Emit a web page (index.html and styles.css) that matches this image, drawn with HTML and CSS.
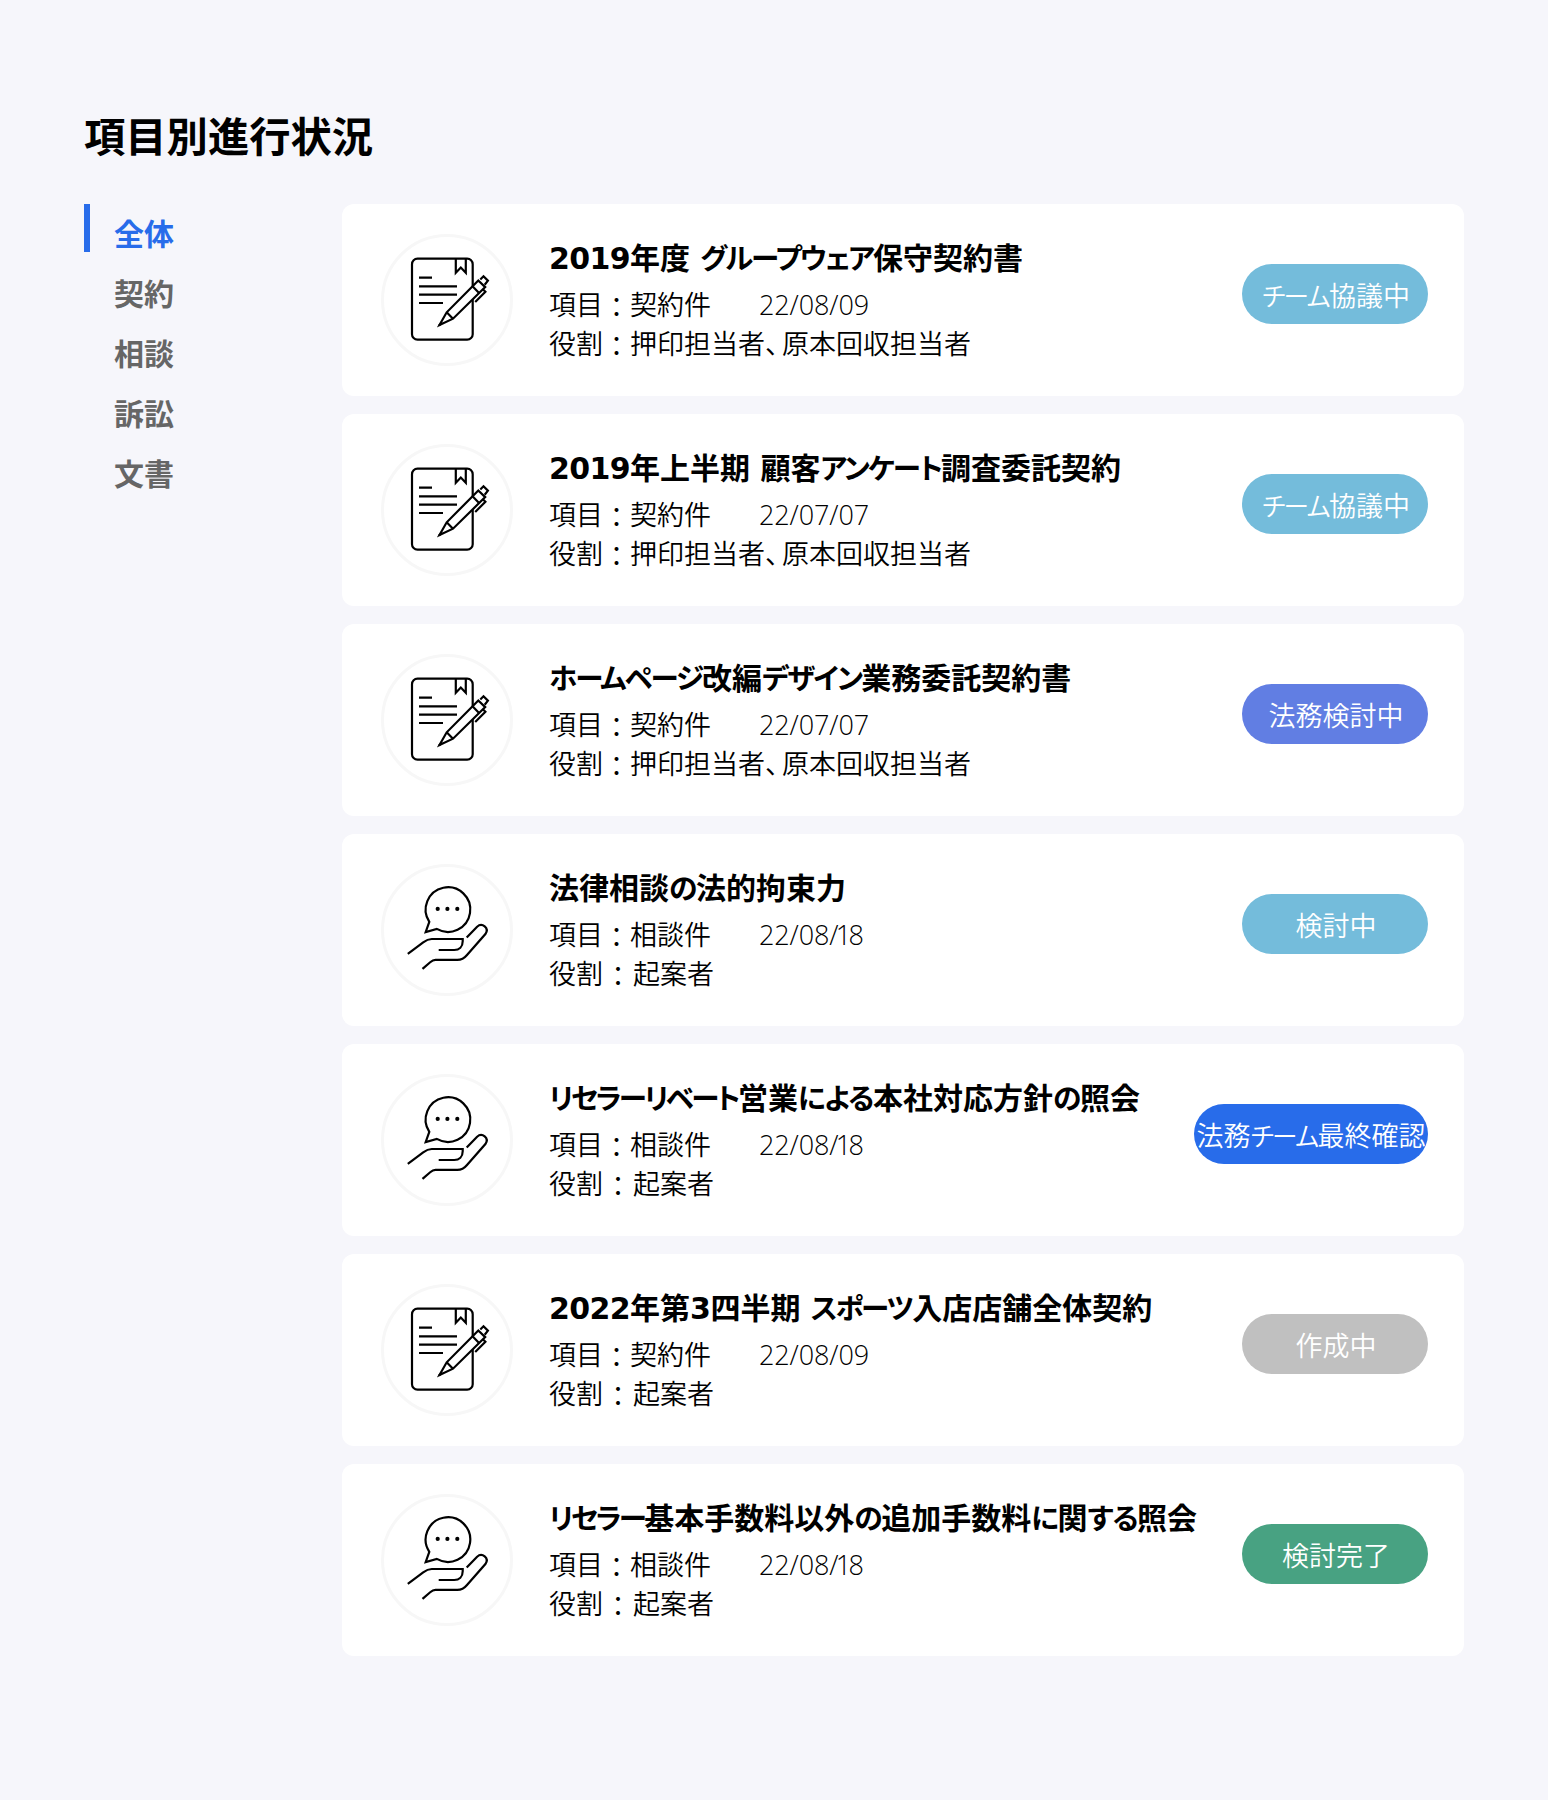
FILE: index.html
```html
<!DOCTYPE html>
<html lang="ja">
<head>
  <meta charset="UTF-8" />
  <meta name="viewport" content="width=device-width, initial-scale=1.0"/>
  <title>項目別進行状況</title>
  <link rel="stylesheet" href="styles.css">
</head>
<body>
  <svg class="sprite" aria-hidden="true">
    <symbol id="icon-contract" viewBox="0 0 132 132">
      <rect x="31" y="24.7" width="60.7" height="81" rx="5.5"/>
      <path d="M74.8 24.7v14.1l5-5.2 5 5.2V24.7"/>
      <path d="M38 43.7h13M38 52.3h38M38 60.7h38M38 69h24"/>
      <path class="pen" d="M58.5 91l7.2-12.7 31.6-31.8 6.9 6.6L72 84.7z"/>
      <path d="M65.7 78.3l6.3 6.4M91.5 52.3l6.3 6.4M58 91.5l1.5-1.5M99.3 45.5l3.2-3.2 4.4 4.4-3.2 4M101.8 55.3l2.6 2.5L94.2 68"/>
    </symbol>
    <symbol id="icon-consult" viewBox="0 0 132 132">
      <path d="M48.3 57.8a22.3 22.3 0 1 1 7.5 7.1L44.7 68z"/>
      <g class="dots">
        <circle cx="56.7" cy="44.9" r="2.1"/>
        <circle cx="66.4" cy="44.9" r="2.1"/>
        <circle cx="76.3" cy="44.9" r="2.1"/>
      </g>
      <path d="M26.8 89.9l15.4-11.6c2-1.5 4.5-3.3 8.5-3.3h31v2.2c0 5.6-3.5 8.8-8.5 8.8H57.7"/>
      <path d="M85.7 73.5l10.4-10.8c5-4.5 12.5 1.2 8.3 7.4L86 91c-3 3.6-5.6 4.9-9.7 4.9H54.5c-2.4 0-3.6.8-5.3 2.3l-7.7 6.6"/>
    </symbol>
  </svg>

  <h1 class="page-title">項目別進行状況</h1>

  <div class="content">
    <ul class="tabs">
      <li class="tab active">全体</li>
      <li class="tab">契約</li>
      <li class="tab">相談</li>
      <li class="tab">訴訟</li>
      <li class="tab">文書</li>
    </ul>

    <div class="list">
      <div class="card">
        <div class="icon"><svg><use href="#icon-contract"/></svg></div>
        <div class="info">
          <h2><span class="num">2019</span>年度 <span class="kana">グループウェア</span>保守契約書</h2>
          <p><span class="category">項目<span class="colon">：</span>契約件</span><span class="date">22/08/09</span></p>
          <p>役割<span class="colon">：</span>押印担当者<span class="comma">、</span>原本回収担当者</p>
        </div>
        <span class="status team"><span class="kana">チーム</span>協議中</span>
      </div>

      <div class="card">
        <div class="icon"><svg><use href="#icon-contract"/></svg></div>
        <div class="info">
          <h2><span class="num">2019</span>年上半期 顧客<span class="kana">アンケート</span>調査委託契約</h2>
          <p><span class="category">項目<span class="colon">：</span>契約件</span><span class="date">22/07/07</span></p>
          <p>役割<span class="colon">：</span>押印担当者<span class="comma">、</span>原本回収担当者</p>
        </div>
        <span class="status team"><span class="kana">チーム</span>協議中</span>
      </div>

      <div class="card">
        <div class="icon"><svg><use href="#icon-contract"/></svg></div>
        <div class="info">
          <h2><span class="kana">ホームページ</span>改編<span class="kana">デザイン</span>業務委託契約書</h2>
          <p><span class="category">項目<span class="colon">：</span>契約件</span><span class="date">22/07/07</span></p>
          <p>役割<span class="colon">：</span>押印担当者<span class="comma">、</span>原本回収担当者</p>
        </div>
        <span class="status legal">法務検討中</span>
      </div>

      <div class="card">
        <div class="icon"><svg><use href="#icon-consult"/></svg></div>
        <div class="info">
          <h2>法律相談<span class="hira">の</span>法的拘束力</h2>
          <p><span class="category">項目<span class="colon">：</span>相談件</span><span class="date">22/08<span class="slash">/</span><span class="one">1</span>8</span></p>
          <p>役割<span class="colon wide">：</span>起案者</p>
        </div>
        <span class="status team">検討中</span>
      </div>

      <div class="card">
        <div class="icon"><svg><use href="#icon-consult"/></svg></div>
        <div class="info">
          <h2><span class="kana tight">リセラーリベート</span>営業<span class="hira">による</span>本社対応方針<span class="hira">の</span>照会</h2>
          <p><span class="category">項目<span class="colon">：</span>相談件</span><span class="date">22/08<span class="slash">/</span><span class="one">1</span>8</span></p>
          <p>役割<span class="colon wide">：</span>起案者</p>
        </div>
        <span class="status final">法務<span class="kana">チーム</span>最終確認</span>
      </div>

      <div class="card">
        <div class="icon"><svg><use href="#icon-contract"/></svg></div>
        <div class="info">
          <h2><span class="num">2022</span>年第<span class="num">3</span>四半期 <span class="kana">スポーツ</span>入店店舗全体契約</h2>
          <p><span class="category">項目<span class="colon">：</span>契約件</span><span class="date">22/08/09</span></p>
          <p>役割<span class="colon wide">：</span>起案者</p>
        </div>
        <span class="status draft">作成中</span>
      </div>

      <div class="card">
        <div class="icon"><svg><use href="#icon-consult"/></svg></div>
        <div class="info">
          <h2><span class="kana tight">リセラー</span>基本手数料以外<span class="hira">の</span>追加手数料<span class="hira">に</span>関<span class="hira">する</span>照会</h2>
          <p><span class="category">項目<span class="colon">：</span>相談件</span><span class="date">22/08<span class="slash">/</span><span class="one">1</span>8</span></p>
          <p>役割<span class="colon wide">：</span>起案者</p>
        </div>
        <span class="status done">検討完了</span>
      </div>
    </div>
  </div>
</body>
</html>
```
FILE: styles.css
```css
* {
  box-sizing: border-box;
  margin: 0;
  padding: 0;
}

body {
  background: #f6f6fb;
  color: #000;
  font-family: 'Noto Sans CJK JP', sans-serif;
  padding: 104px 84px 144px;
  min-height: 1800px;
}

.sprite {
  display: none;
}

.page-title {
  font-size: 41.3px;
  line-height: 60px;
  font-weight: 700;
  margin-bottom: 40px;
}

.content {
  display: flex;
}

.tabs {
  list-style: none;
  width: 258px;
}

.tab {
  font-size: 30px;
  line-height: 56px;
  height: 60px;
  font-weight: 700;
  color: #666;
  padding-left: 30px;
}

.tab.active {
  color: #286cea;
  height: 48px;
  margin-bottom: 12px;
  padding-left: 24px;
  border-left: 6px solid #286cea;
}

.list {
  display: flex;
  flex-direction: column;
  gap: 18px;
  width: 1122px;
}

.card {
  display: flex;
  align-items: flex-start;
  height: 192px;
  padding: 30px 36px 0 39px;
  background: #fff;
  border-radius: 12px;
}

.icon {
  width: 132px;
  height: 132px;
  border: 3px solid #f7f7f7;
  border-radius: 50%;
  margin-right: 36px;
  flex-shrink: 0;
}

.icon svg {
  display: block;
  width: 132px;
  height: 132px;
  margin: -3px;
  fill: none;
  stroke: #000;
  stroke-width: 2.2;
}

.pen {
  fill: #fff;
}

.dots {
  fill: #000;
  stroke: none;
}

.info {
  flex: 1;
  white-space: nowrap;
}

.info h2 {
  height: 48px;
  font-size: 30px;
  line-height: 44px;
  font-weight: 700;
  word-spacing: 3.5px;
  margin-bottom: 2px;
}

.info p {
  height: 39px;
  font-size: 27px;
  line-height: 39px;
  font-weight: 350;
}

.category {
  display: inline-block;
  width: 210px;
}

/* Kana is set tighter than kanji */
.kana {
  font-size: 0.95em;
  line-height: 1;
  font-feature-settings: "palt";
  letter-spacing: -0.066em;
}

.kana.tight {
  letter-spacing: -0.09em;
}

.hira {
  font-size: 0.96em;
  line-height: 1;
  font-feature-settings: "palt";
  letter-spacing: -0.05em;
}

.num {
  font-family: 'DejaVu Sans', sans-serif;
  line-height: 1;
  letter-spacing: -0.6px;
}

.date {
  font-family: 'Open Sans', sans-serif;
  font-weight: 300;
  line-height: 1;
  letter-spacing: -0.1px;
}

/* The narrow 1 leaves too much room on both sides */
.slash,
.one {
  letter-spacing: -2.8px;
}

.comma {
  letter-spacing: -10px;
}

.colon {
  display: inline-block;
  width: 27px;
  line-height: 1;
  text-align: center;
  transform: translateY(2px);
}

.colon.wide {
  width: 30px;
}

.status {
  min-width: 186px;
  height: 60px;
  margin-top: 30px;
  padding-left: 2px;
  border-radius: 30px;
  color: #fff;
  font-size: 27px;
  line-height: 62px;
  font-weight: 350;
  text-align: center;
  white-space: nowrap;
}

.team { background: #74bcdb; }
.legal { background: #617ee3; }
.final { background: #286cea; width: 234px; padding-left: 0; }
.draft { background: #c0c0c0; }
.done { background: #48a282; }
```
